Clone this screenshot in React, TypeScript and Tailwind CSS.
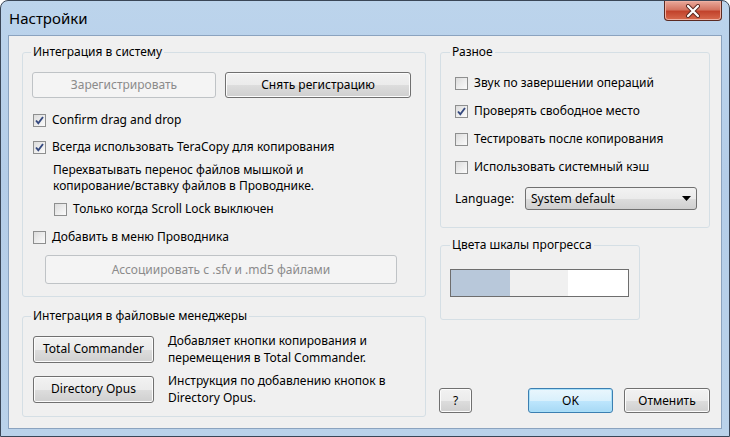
import React from "react";

/* ───────── Win7 bits ───────── */

const FONT = { fontFamily: '"Noto Sans", "Open Sans", sans-serif' };

function CheckBox({ checked = false }: { checked?: boolean }) {
  return (
    <span className="flex h-[13px] w-[13px] shrink-0 items-center justify-center border border-[#8e8f8f] bg-gradient-to-br from-[#dcdcdc] via-[#ececec] to-[#fbfbfb]">
      {checked && (
        <svg width="11" height="11" viewBox="0 0 11 11">
          <path d="M2 5.5 L4.3 8.2 L9 2" fill="none" stroke="#35497f" strokeWidth="1.9" />
        </svg>
      )}
    </span>
  );
}

function Check({ label, checked }: { label: string; checked?: boolean }) {
  return (
    <label className="flex h-[20px] items-center gap-[6px]">
      <CheckBox checked={checked} />
      <span>{label}</span>
    </label>
  );
}

function Btn({
  children,
  className = "",
  disabled = false,
  primary = false,
}: {
  children: React.ReactNode;
  className?: string;
  disabled?: boolean;
  primary?: boolean;
}) {
  const look = disabled
    ? "border-[#bfc3c6] bg-[#f4f4f4] text-[#8b8b8b]"
    : primary
      ? "border-[#3c7fb1] bg-[linear-gradient(#eaf6fd_0%,#d9f0fc_50%,#bee6fd_51%,#a7d9f5_100%)] shadow-[inset_0_0_0_1px_#a9e0f9]"
      : "border-[#707070] bg-[linear-gradient(#f2f2f2_0%,#ebebeb_50%,#dddddd_51%,#cfcfcf_100%)] shadow-[inset_0_0_0_1px_#fcfcfc]";
  return (
    <button
      disabled={disabled}
      className={`flex items-center justify-center rounded-[3px] border ${look} ${className}`}
    >
      {children}
    </button>
  );
}

// legend sits inside the fieldset's left padding, so its margin pulls it back
function Group({
  title,
  children,
  className = "",
  legend = "",
}: {
  title: string;
  children: React.ReactNode;
  className?: string;
  legend?: string;
}) {
  return (
    <fieldset className={`rounded-[3px] border border-[#d5dfe5] ${className}`}>
      <legend className={`px-[2px] leading-[16px] ${legend}`}>{title}</legend>
      {children}
    </fieldset>
  );
}

/* ───────── Dialog ───────── */

export default function App() {
  return (
    <div
      className="flex h-[437px] w-[730px] flex-col overflow-hidden rounded-t-[8px] border border-[#3a4657] bg-[linear-gradient(#bcd4ec,#b4cde8_40%,#bad2ea)] text-[12px] text-black"
      style={FONT}
    >
      {/* title bar */}
      <div className="flex h-[34px] shrink-0 items-start justify-between pl-[8px] pr-[7px]">
        <span className="mt-[7px] text-[15px] leading-[20px] text-black">Настройки</span>
        <button className="flex h-[20px] w-[58px] items-center justify-center rounded-b-[4px] border border-t-0 border-[#5b2a22] bg-[linear-gradient(#e9a99b,#d47562_45%,#c2432c_55%,#d76a4e)] shadow-[inset_0_0_0_1px_#eeb0a2]">
          <svg width="16" height="14" viewBox="0 0 16 14">
            <path d="M3 2 L13 12 M13 2 L3 12" stroke="#5a2a22" strokeWidth="4" strokeLinecap="round" />
            <path d="M3 2 L13 12 M13 2 L3 12" stroke="#ffffff" strokeWidth="2.2" strokeLinecap="round" />
          </svg>
        </button>
      </div>

      {/* client area */}
      <div className="mx-[7px] mb-[7px] flex flex-1 gap-[14px] border border-[#8ba3bf] bg-[#f0f0f0] pl-[13px] pt-[8px]">
        {/* left column */}
        <div className="flex w-[404px] flex-col">
          <Group title="Интеграция в систему" legend="-ml-[1px]" className="pb-[12px] pl-[9px] pt-[12px]">
            <div className="flex gap-[9px]">
              <Btn disabled className="h-[26px] w-[184px]">Зарегистрировать</Btn>
              <Btn className="h-[26px] w-[186px]">Снять регистрацию</Btn>
            </div>
            <div className="mt-[12px] pl-[1px]">
              <Check label="Confirm drag and drop" checked />
            </div>
            <div className="mt-[7px] pl-[1px]">
              <Check label="Всегда использовать TeraCopy для копирования" checked />
            </div>
            <p className="mt-[5px] pl-[21px] leading-[16px]">
              Перехватывать перенос файлов мышкой и
              <br />
              копирование/вставку файлов в Проводнике.
            </p>
            <div className="mt-[5px] pl-[22px]">
              <Check label="Только когда Scroll Lock выключен" />
            </div>
            <div className="mt-[8px] pl-[1px]">
              <Check label="Добавить в меню Проводника" />
            </div>
            <div className="mt-[8px] pl-[13px]">
              <Btn disabled className="h-[29px] w-[352px]">Ассоциировать с .sfv и .md5 файлами</Btn>
            </div>
          </Group>

          <Group
            title="Интеграция в файловые менеджеры"
            legend="-ml-[2px]"
            className="mt-[11px] flex flex-col gap-[6px] pb-[10px] pl-[10px] pt-[8px]"
          >
            <div className="flex items-center gap-[14px]">
              <Btn className="h-[27px] w-[121px]">Total Commander</Btn>
              <p className="leading-[17px]">
                Добавляет кнопки копирования и
                <br />
                перемещения в Total Commander.
              </p>
            </div>
            <div className="flex items-center gap-[14px]">
              <Btn className="h-[27px] w-[121px]">Directory Opus</Btn>
              <p className="leading-[17px]">
                Инструкция по добавлению кнопок в
                <br />
                Directory Opus.
              </p>
            </div>
          </Group>
        </div>

        {/* right column */}
        <div className="flex w-[270px] flex-col">
          <Group
            title="Разное"
            legend="-ml-[5px]"
            className="flex flex-col gap-[8px] pb-[17px] pl-[14px] pr-[12px] pt-[13px]"
          >
            <Check label="Звук по завершении операций" />
            <Check label="Проверять свободное место" checked />
            <Check label="Тестировать после копирования" />
            <Check label="Использовать системный кэш" />
            <div className="mt-[2px] flex items-center">
              <span className="w-[70px]">Language:</span>
              <div className="flex h-[23px] w-[172px] items-center justify-between rounded-[3px] border border-[#707070] bg-[linear-gradient(#f2f2f2_0%,#ebebeb_50%,#dddddd_51%,#cfcfcf_100%)] pl-[5px] pr-[5px]">
                <span>System default</span>
                <svg width="9" height="5" viewBox="0 0 9 5">
                  <path d="M0 0 H9 L4.5 5 Z" fill="#000" />
                </svg>
              </div>
            </div>
          </Group>

          <Group title="Цвета шкалы прогресса" className="mt-[9px] w-[200px] pb-[22px] pl-[9px] pt-[16px]">
            <div className="flex h-[28px] w-[179px] border border-[#6e6e6e]">
              <div className="w-[59px] bg-[#b8c8da]" />
              <div className="w-[58px] bg-[#f0f0f0]" />
              <div className="flex-1 bg-white" />
            </div>
          </Group>

          <div className="mt-[68px] flex items-center">
            <Btn className="-ml-[1px] h-[25px] w-[33px]">?</Btn>
            <Btn primary className="ml-[56px] h-[25px] w-[85px]">OK</Btn>
            <Btn className="ml-[11px] h-[25px] w-[86px]">Отменить</Btn>
          </div>
        </div>
      </div>
    </div>
  );
}
